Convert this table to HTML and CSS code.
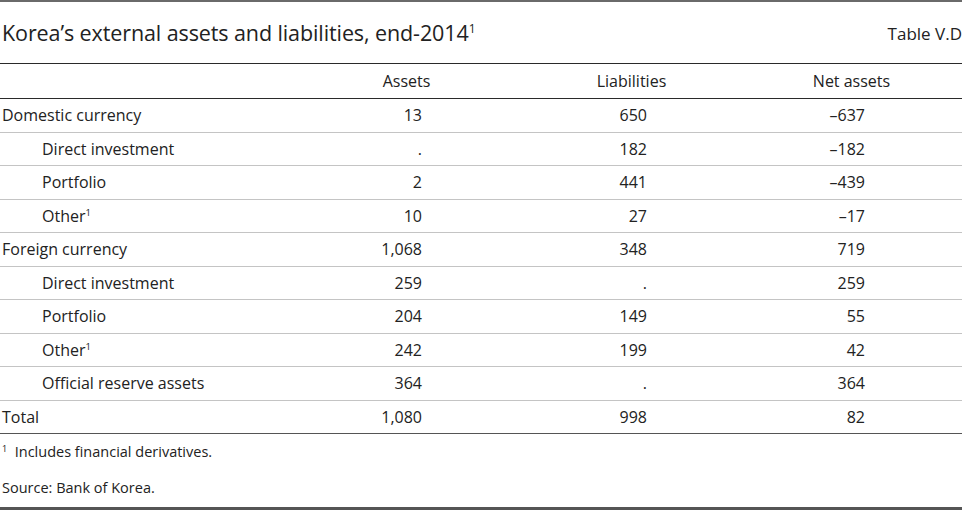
FILE: index.html
```html
<!DOCTYPE html>
<html lang="en">
<head>
<meta charset="utf-8">
<title>Korea's external assets and liabilities</title>
<link rel="stylesheet" href="styles.css">
</head>
<body>
<div class="frame">
  <div class="title-row">
    <h1 class="title">Korea’s external assets and liabilities, end-2014<sup>1</sup></h1>
    <span class="tag">Table V.D</span>
  </div>
  <div class="grid head">
    <div class="cell label"></div>
    <div class="cell hcol">Assets</div>
    <div class="cell hcol">Liabilities</div>
    <div class="cell hcol last">Net assets</div>
  </div>
  <div class="grid row">
    <div class="cell label">Domestic currency</div>
    <div class="cell num">13</div><div class="cell num">650</div><div class="cell num">–637</div>
  </div>
  <div class="grid row">
    <div class="cell label sub">Direct investment</div>
    <div class="cell num">.</div><div class="cell num">182</div><div class="cell num">–182</div>
  </div>
  <div class="grid row">
    <div class="cell label sub">Portfolio</div>
    <div class="cell num">2</div><div class="cell num">441</div><div class="cell num">–439</div>
  </div>
  <div class="grid row">
    <div class="cell label sub">Other<sup>1</sup></div>
    <div class="cell num">10</div><div class="cell num">27</div><div class="cell num">–17</div>
  </div>
  <div class="grid row">
    <div class="cell label">Foreign currency</div>
    <div class="cell num">1,068</div><div class="cell num">348</div><div class="cell num">719</div>
  </div>
  <div class="grid row">
    <div class="cell label sub">Direct investment</div>
    <div class="cell num">259</div><div class="cell num">.</div><div class="cell num">259</div>
  </div>
  <div class="grid row">
    <div class="cell label sub">Portfolio</div>
    <div class="cell num">204</div><div class="cell num">149</div><div class="cell num">55</div>
  </div>
  <div class="grid row">
    <div class="cell label sub">Other<sup>1</sup></div>
    <div class="cell num">242</div><div class="cell num">199</div><div class="cell num">42</div>
  </div>
  <div class="grid row">
    <div class="cell label sub">Official reserve assets</div>
    <div class="cell num">364</div><div class="cell num">.</div><div class="cell num">364</div>
  </div>
  <div class="grid row total">
    <div class="cell label">Total</div>
    <div class="cell num">1,080</div><div class="cell num">998</div><div class="cell num">82</div>
  </div>
  <div class="notes">
    <p class="note first"><sup>1</sup>&nbsp; Includes financial derivatives.</p>
    <p class="note">Source: Bank of Korea.</p>
  </div>
</div>
</body>
</html>
```
FILE: styles.css
```css
html, body {
  margin: 0;
  padding: 0;
  background: #ffffff;
}
body {
  font-family: "Open Sans", "Noto Sans", sans-serif;
  color: #222222;
}
.frame {
  width: 962px;
  border-top: 2px solid #6a6a6a;
  border-bottom: 3px solid #555555;
}
.title-row {
  height: 61px;
  display: flex;
  align-items: center;
  justify-content: space-between;
  border-bottom: 1px solid #2a2a2a;
}
.title {
  margin: 0 0 0 2px;
  font-size: 21.5px;
  font-weight: 400;
  letter-spacing: -0.1px;
}
.title sup {
  font-size: 12px;
  vertical-align: 8px;
  line-height: 0;
}
.tag {
  font-size: 17px;
  padding-top: 1px;
}
.grid {
  display: grid;
  grid-template-columns: 294px 225px 225px 1fr;
  align-items: center;
  box-sizing: border-box;
  font-size: 16px;
}
.head {
  height: 35px;
  border-bottom: 1px solid #2a2a2a;
}
.row {
  height: 33.5px;
  border-bottom: 1px solid #c4c4c4;
}
.row.total {
  border-bottom: 1.5px solid #555555;
}
.cell {
  white-space: nowrap;
}
.label {
  padding-left: 2px;
}
.label.sub {
  padding-left: 42px;
}
.label sup {
  font-size: 9.5px;
  vertical-align: 6px;
  line-height: 0;
}
.hcol {
  text-align: center;
}
.hcol.last {
  padding-right: 3px;
}
.num {
  text-align: right;
  padding-right: 97px;
}
.notes {
  padding: 9px 0 10px 2px;
}
.note {
  margin: 0;
  font-size: 14.5px;
  height: 18px;
  line-height: 18px;
}
.note.first {
  height: 36px;
}
.note sup {
  font-size: 9px;
  vertical-align: 5px;
  line-height: 0;
}
```
